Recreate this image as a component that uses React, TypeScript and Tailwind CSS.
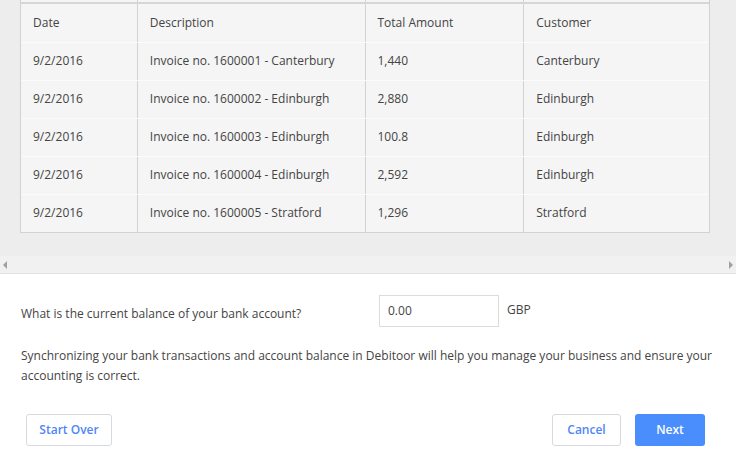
import React from "react";

const rows = [
  ["9/2/2016", "Invoice no. 1600001 - Canterbury", "1,440", "Canterbury"],
  ["9/2/2016", "Invoice no. 1600002 - Edinburgh", "2,880", "Edinburgh"],
  ["9/2/2016", "Invoice no. 1600003 - Edinburgh", "100.8", "Edinburgh"],
  ["9/2/2016", "Invoice no. 1600004 - Edinburgh", "2,592", "Edinburgh"],
  ["9/2/2016", "Invoice no. 1600005 - Stratford", "1,296", "Stratford"],
];

const cols = ["w-[117px]", "w-[228px]", "w-[159px]", "w-[185px]"];

function Row({ cells, header }: { cells: string[]; header?: boolean }) {
  return (
    <div className={`flex h-[38px] ${header ? "" : "border-t border-[#fbfbfb]"}`}>
      {cells.map((c, i) => (
        <div
          key={i}
          className={`${cols[i]} flex items-center pl-[12px] ${header ? "" : "pb-[1px]"} ${i < 3 ? "border-r border-[#d2d2d2]" : ""}`}
        >
          {c}
        </div>
      ))}
    </div>
  );
}

export default function App() {
  return (
    <div
      className="w-[736px] h-[457px] bg-white text-[#444] text-[12px] overflow-hidden"
      style={{ fontFamily: '"Open Sans", sans-serif' }}
    >
      <div className="bg-[#ededed] pl-[20px] h-[256px]">
        <div className="w-[690px] bg-[#f5f5f5] border-l border-r border-b border-[#d2d2d2]">
          <div className="flex h-[2px]">
            {cols.map((c, i) => (
              <div key={i} className={`${c} ${i < 3 ? "border-r border-[#d2d2d2]" : ""}`} />
            ))}
          </div>
          <div className="border-t-2 border-[#d6d6d6]">
            <Row header cells={["Date", "Description", "Total Amount", "Customer"]} />
            {rows.map((r, i) => (
              <Row key={i} cells={r} />
            ))}
          </div>
        </div>
      </div>
      <div className="h-[18px] bg-[#f1f1f1] border-b border-[#e2e2e2] flex items-center justify-between px-[3px]">
        <svg width="5" height="8" viewBox="0 0 5 8">
          <path d="M4 0 L0 4 L4 8 Z" fill="#a0a0a0" />
        </svg>
        <svg width="5" height="8" viewBox="0 0 5 8">
          <path d="M1 0 L5 4 L1 8 Z" fill="#a0a0a0" />
        </svg>
      </div>
      <div className="px-[21px] pt-[20px]">
        <div className="flex items-center">
          <div className="w-[358px] pt-[6px]">What is the current balance of your bank account?</div>
          <div className="mt-[1px] w-[120px] h-[32px] border border-[#dcdcdc] flex items-center pl-[8px]">0.00</div>
          <div className="ml-[8px] -mt-[2px]">GBP</div>
        </div>
        <p className="mt-[19px] leading-[20px] -mr-[6px]">
          Synchronizing your bank transactions and account balance in Debitoor will help you manage your business and ensure your accounting is correct.
        </p>
        <div className="flex mt-[28px] pl-[5px] pr-[10px] items-center">
          <button className="h-[32px] w-[86px] border border-[#d6d9de] rounded-[3px] text-[#4f86f7] text-[12px] font-semibold">
            Start Over
          </button>
          <div className="flex-1" />
          <button className="h-[32px] w-[69px] border border-[#d6d9de] rounded-[3px] text-[#4f86f7] text-[12px] font-semibold">
            Cancel
          </button>
          <button className="ml-[14px] h-[32px] w-[70px] rounded-[3px] bg-[#4a8dfd] text-white text-[12px] font-semibold">
            Next
          </button>
        </div>
      </div>
    </div>
  );
}
